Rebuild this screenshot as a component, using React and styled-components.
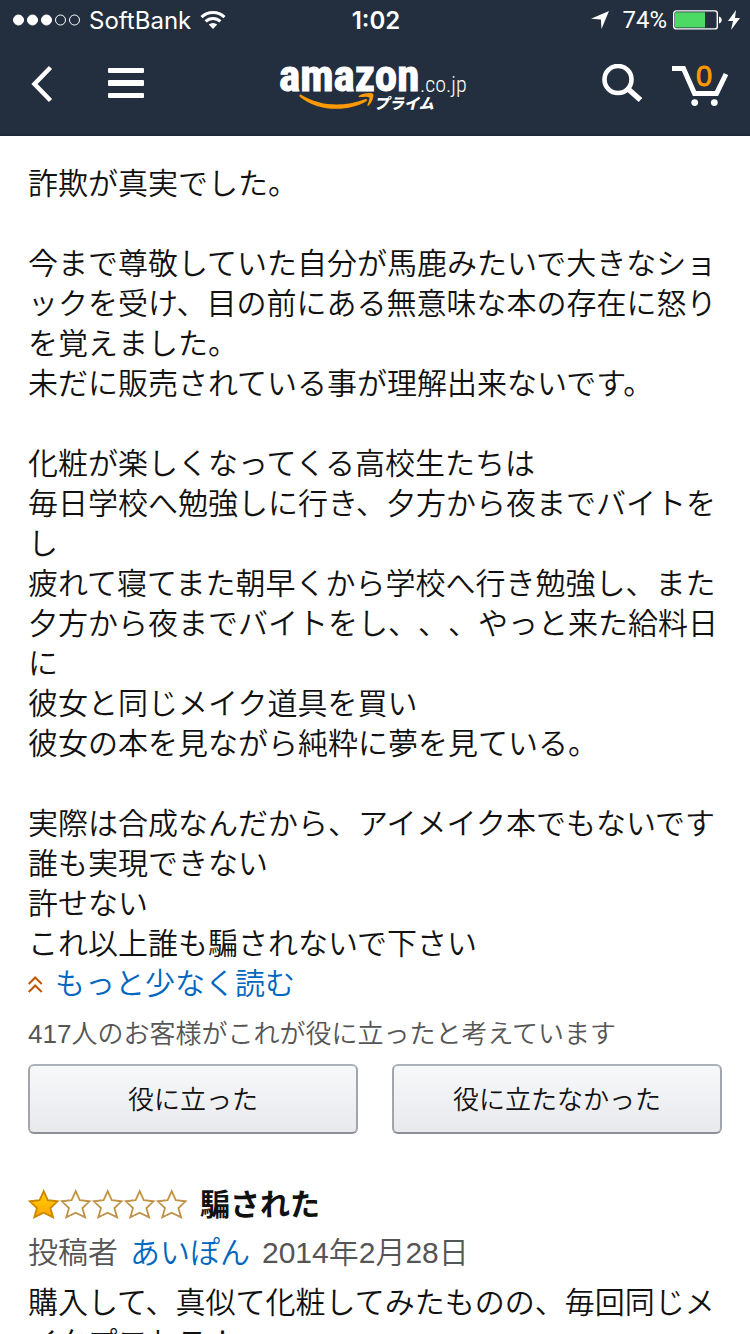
import React from 'react'
import styled, { createGlobalStyle } from 'styled-components';

const GlobalStyle = createGlobalStyle`
  * {
    box-sizing: border-box;
  }

  body {
    margin: 0;
    background: #fff;
    color: #111;
    font-family: "Liberation Sans", "Noto Sans CJK JP", sans-serif;
    font-weight: 350;
    text-spacing-trim: space-all;
  }
`;

const Screen = styled.div`
  height: 100vh;
  display: flex;
  flex-direction: column;
  overflow: hidden;
`;

const Header = styled.header`
  flex-shrink: 0;
  background: #232f3e;
  color: #fff;
  padding-bottom: 6px;
  border-bottom: 2px solid #1f2938;
`;

const StatusBar = styled.div`
  height: 40px;
  padding: 0 10px 0 12px;
  display: grid;
  grid-template-columns: 1fr auto 1fr;
  align-items: center;
  font-family: Inter, sans-serif;
  font-size: 24px;
  font-weight: 400;
`;

const StatusGroup = styled.div`
  display: flex;
  align-items: center;
  gap: ${(props) => props.$gap};
  justify-content: ${(props) => (props.$end ? 'flex-end' : 'flex-start')};
`;

const Clock = styled.time`
  font-weight: 600;
`;

const Percent = styled.span`
  margin-left: 7px;
  font-family: Roboto, sans-serif;
`;

const Nav = styled.nav`
  height: 88px;
  padding: 0 22px 0 20px;
  display: grid;
  grid-template-columns: 1fr auto 1fr;
  align-items: center;
`;

const NavGroup = styled.div`
  display: flex;
  align-items: center;
  gap: ${(props) => props.$gap};
  justify-content: ${(props) => (props.$end ? 'flex-end' : 'flex-start')};
`;

const IconButton = styled.button`
  display: flex;
  padding: 0;
  border: 0;
  background: none;
  color: inherit;
  cursor: pointer;
`;

const LogoLink = styled.a`
  display: flex;

  svg {
    overflow: visible;
  }
`;

const Content = styled.main`
  flex: 1;
  min-height: 0;
  padding: 28px 28px 0;
  overflow-y: auto;
  scrollbar-width: none;
`;

const ReviewText = styled.p`
  margin: 0;
  font-size: 30px;
  line-height: 40px;
  white-space: pre-line;
`;

const TextLink = styled.a`
  color: #0066c0;
  text-decoration: none;
`;

const ReadLess = styled(TextLink)`
  display: flex;
  align-items: center;
  gap: 12px;
  font-size: 30px;
  line-height: 40px;
`;

const HelpfulCount = styled.p`
  margin: 12px 0;
  color: #555;
  font-size: 26px;
  line-height: 36px;
`;

const VoteRow = styled.div`
  display: grid;
  grid-template-columns: 1fr 1fr;
  gap: 34px;
`;

const VoteButton = styled.button`
  height: 70px;
  padding: 0 0 4px;
  border: 2px solid;
  border-color: #adb1b8 #a2a6ac #8d9096;
  border-radius: 6px;
  background: linear-gradient(#f7f8fa, #e7e9ec);
  color: #111;
  font: inherit;
  font-size: 26px;
  cursor: pointer;
`;

const Review = styled.article`
  margin-top: 51px;
`;

const ReviewHead = styled.div`
  display: flex;
  align-items: center;
  gap: 12px;
`;

const ReviewTitle = styled.h2`
  margin: 0;
  font-size: 30px;
  font-weight: 700;
  line-height: 40px;
`;

const Byline = styled.div`
  display: flex;
  gap: 12px;
  margin: 8px 0 10px;
  color: #555;
  font-size: 30px;
  line-height: 40px;
`;

const firstReview = `詐欺が真実でした。

今まで尊敬していた自分が馬鹿みたいで大きなショックを受け、目の前にある無意味な本の存在に怒りを覚えました。
未だに販売されている事が理解出来ないです。

化粧が楽しくなってくる高校生たちは
毎日学校へ勉強しに行き、夕方から夜までバイトをし
疲れて寝てまた朝早くから学校へ行き勉強し、また夕方から夜までバイトをし、、、やっと来た給料日に
彼女と同じメイク道具を買い
彼女の本を見ながら純粋に夢を見ている。

実際は合成なんだから、アイメイク本でもないです
誰も実現できない
許せない
これ以上誰も騙されないで下さい`;

const secondReview = `購入して、真似て化粧してみたものの、毎回同じメイクプロセス！`;

const Signal = () => (
  <svg width="68" height="12" viewBox="0 0 68 12" fill="none" stroke="#fff">
    {[0, 1, 2, 3, 4].map((i) => (
      <circle key={i} cx={6.5 + i * 14} cy="6" r="5" fill={i < 3 ? '#fff' : 'none'} />
    ))}
  </svg>
)

const Wifi = () => (
  <svg width="26" height="20" viewBox="0 0 26 20" fill="none" stroke="#fff" strokeWidth="3">
    <path d="M1.5 7.2a16.5 16.5 0 0 1 23 0" />
    <path d="M5.6 11.4a10.6 10.6 0 0 1 14.8 0" />
    <path d="M13 19l-4.2-4.4a6 6 0 0 1 8.4 0z" fill="#fff" stroke="none" />
  </svg>
)

const Location = () => (
  <svg width="18" height="18" viewBox="0 0 18 18" fill="#fff">
    <path d="M18 0L10.5 18l-.6-9.6L0 7.8z" />
  </svg>
)

const Battery = () => (
  <svg width="49" height="20" viewBox="0 0 49 20" fill="none">
    <rect x=".7" y=".9" width="43.6" height="18" rx="2.5" stroke="#fff" strokeWidth="1.4" />
    <rect x="2" y="2.3" width="30" height="15.2" fill="#4cd964" />
    <path d="M46 6.5c3.6.6 3.6 6.4 0 7z" fill="#fff" />
  </svg>
)

const Bolt = () => (
  <svg width="12" height="20" viewBox="0 0 12 20" fill="#fff">
    <path d="M8 0L0 11h5L3 20l9-12H7z" />
  </svg>
)

const Logo = () => (
  <svg width="188" height="52" viewBox="0 0 188 52" fill="#fff">
    <text x="-1" y="33" fontFamily="Roboto Condensed, Open Sans Condensed, Liberation Sans, sans-serif" fontSize="45" fontWeight="700" stroke="#fff">amazon</text>
    <text x="140" y="34" fontFamily="Roboto Condensed, Open Sans Condensed, Liberation Sans, sans-serif" fontSize="22" fontWeight="300">.co.jp</text>
    <path d="M21 36.7C40 48.5 64 49 85 41.2c1.8-.7 3 .9 1.4 2.1C69 54 38 54 20 39c-1.2-1.2-.2-3 1-2.3z" fill="#f90" />
    <path d="M79 37.8c4-3.2 13.4-3.6 14.2-1.7.8 2.6-1.2 8.6-4.4 11.4-1 .8-1.7.3-1.3-.8 1-2.5 2.4-6.2 1.7-7.2-.8-1.2-5.6-.9-9.2-.4-1.4.2-1.9-.6-1-1.3z" fill="#f90" />
    <text x="94" y="51" fontFamily="Noto Sans CJK JP, sans-serif" fontSize="15" fontWeight="900" fontStyle="italic">プライム</text>
  </svg>
)

const Stars = ({ rating }) => (
  <svg width="160" height="32" viewBox="0 0 160 32" role="img" aria-label={`5つ星のうち${rating}`}>
    <defs>
      <linearGradient id="gold" x1="0" y1="0" x2="0" y2="1">
        <stop offset="0" stopColor="#ffce00" />
        <stop offset="1" stopColor="#ffa700" />
      </linearGradient>
    </defs>
    {[0, 1, 2, 3, 4].map((i) => (
      <path
        key={i}
        d="M15.7 2.2L19.8 11.2l9.8 1.1-7.2 6.7 2.7 9.4-9.4-4.6-9.4 4.6L9 19l-7.2-6.7 9.8-1.1z"
        transform={`translate(${i * 32} 0)`}
        fill={i < rating ? 'url(#gold)' : '#fff'}
        stroke={i < rating ? '#c98600' : '#bf9345'}
        strokeWidth="1.8"
      />
    ))}
  </svg>
)

const App = () => {
  return (
    <Screen lang="ja">
      <GlobalStyle />
      <Header>
        <StatusBar>
          <StatusGroup $gap="9px">
            <Signal />
            SoftBank
            <Wifi />
          </StatusGroup>
          <Clock>1:02</Clock>
          <StatusGroup $gap="6px" $end>
            <Location />
            <Percent>74%</Percent>
            <Battery />
            <Bolt />
          </StatusGroup>
        </StatusBar>
        <Nav>
          <NavGroup $gap="54px">
            <IconButton aria-label="戻る">
              <svg width="34" height="38" viewBox="-10 0 34 38" fill="none" stroke="#fff" strokeWidth="4.5">
                <path d="M20.5 2.5L4.5 19l16 16.5" />
              </svg>
            </IconButton>
            <IconButton aria-label="メニュー">
              <svg width="36" height="32" viewBox="0 0 36 32" fill="#fff">
                <rect y="0" width="36" height="5" rx="1" />
                <rect y="12" width="36" height="6" rx="1" />
                <rect y="25" width="36" height="5" rx="1" />
              </svg>
            </IconButton>
          </NavGroup>
          <LogoLink href="#" aria-label="amazon.co.jp プライム">
            <Logo />
          </LogoLink>
          <NavGroup $gap="30px" $end>
            <IconButton aria-label="検索">
              <svg width="40" height="40" viewBox="0 0 40 40" fill="none" stroke="#fff">
                <circle cx="16" cy="15.5" r="13.5" strokeWidth="4.6" />
                <path d="M25.5 24.5L38.5 36" strokeWidth="5.4" />
              </svg>
            </IconButton>
            <IconButton aria-label="カート">
              <svg width="56" height="44" viewBox="0 0 56 44" fill="none" stroke="#fff">
                <path d="M0 6.5h11.5l11 25h22L54 12" strokeWidth="5" />
                <circle cx="22.7" cy="40.6" r="3.4" fill="#fff" stroke="none" />
                <circle cx="42.3" cy="40.6" r="3.4" fill="#fff" stroke="none" />
                <text x="24" y="24" fill="#f90" stroke="#f90" strokeWidth=".8" fontFamily="Liberation Sans, sans-serif" fontSize="29">0</text>
              </svg>
            </IconButton>
          </NavGroup>
        </Nav>
      </Header>
      <Content>
        <ReviewText>{firstReview}</ReviewText>
        <ReadLess href="#">
          <svg width="15" height="18" viewBox="0 0 15 18" fill="none" stroke="#c45500" strokeWidth="2">
            <path d="M.7 9l6.5-6.5L13.7 9M.7 17l6.5-6.5 6.5 6.5" />
          </svg>
          もっと少なく読む
        </ReadLess>
        <HelpfulCount>417人のお客様がこれが役に立ったと考えています</HelpfulCount>
        <VoteRow>
          <VoteButton>役に立った</VoteButton>
          <VoteButton>役に立たなかった</VoteButton>
        </VoteRow>
        <Review>
          <ReviewHead>
            <Stars rating={1} />
            <ReviewTitle>騙された</ReviewTitle>
          </ReviewHead>
          <Byline>
            <span>投稿者</span>
            <TextLink href="#">あいぽん</TextLink>
            <span>2014年2月28日</span>
          </Byline>
          <ReviewText>{secondReview}</ReviewText>
        </Review>
      </Content>
    </Screen>
  );
}

export default App
